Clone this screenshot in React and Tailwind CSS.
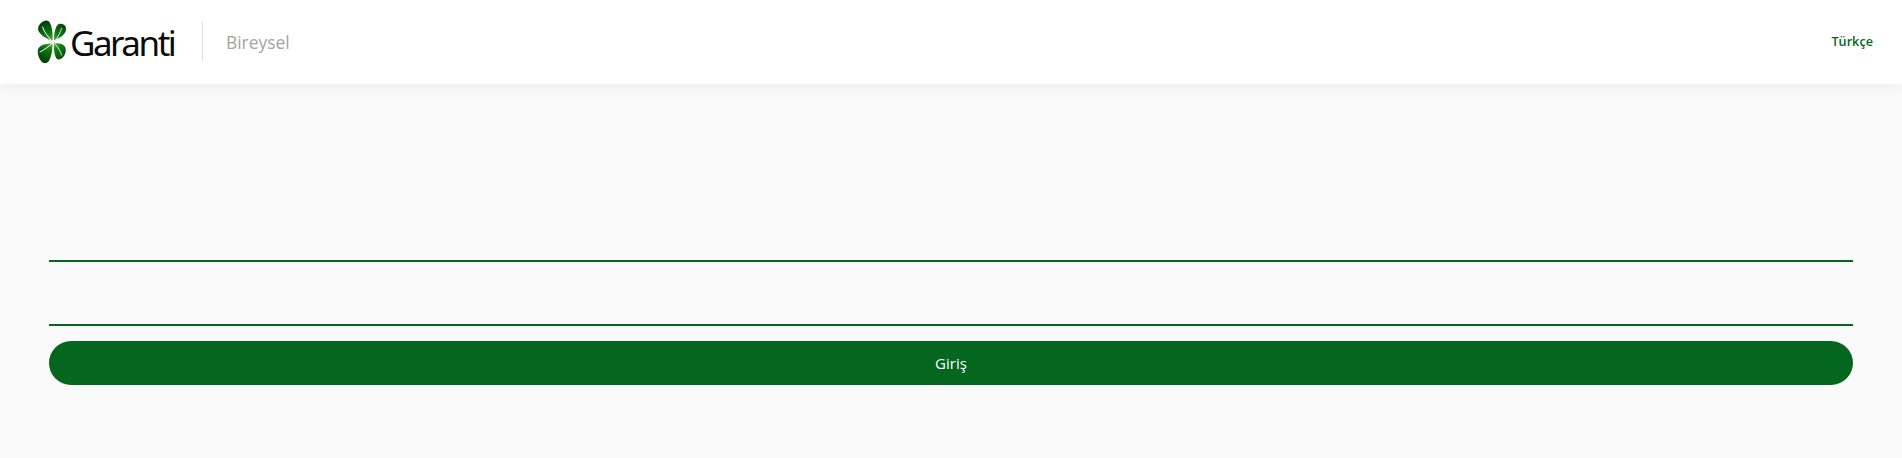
const sans = "font-['Open_Sans','Noto_Sans',sans-serif]";

function Clover() {
  return (
    <svg width="30" height="44" viewBox="0 0 30 44" className="shrink-0">
      <defs>
        <radialGradient id="leaf" gradientUnits="userSpaceOnUse" cx="16" cy="22" r="23">
          <stop offset="0" stopColor="#63c23a" />
          <stop offset="0.4" stopColor="#0f7a14" />
          <stop offset="1" stopColor="#023a07" />
        </radialGradient>
      </defs>
      <g fill="url(#leaf)">
        <path d="M15.5 20.5C11 19.5 5 16.5 2 12C0 9 1.5 5 4 3C6.5 0.5 10 -0.5 12 1.5C15 5 16 13 15.5 20.5Z" />
        <path d="M17 20C17 14 18 8 20.5 5C22.5 3 27 3.5 28.5 6.5C30 10 28 13.5 25 16C22.5 18 19.5 19.5 17 20Z" />
        <path d="M17 23.5C21 23 25 23.5 27.5 26C29.5 28.5 29 33 27 36C25 39 21.5 40.5 19.5 38.5C17.5 35.5 16.5 29 17 23.5Z" />
        <path d="M15.5 23.5C15.5 30 14.5 37 11.5 41.5C9.5 43.5 6.5 43.5 4.5 41.5C2 38.5 0 33.5 1 29.5C2 25.5 8 23.5 15.5 23.5Z" />
      </g>
      <g fill="none" stroke="#ffffff" strokeLinecap="round">
        <path d="M15 21C11 17 7.5 12.5 5.5 7" strokeWidth="1" />
        <path d="M15 23.5C11 27 7 30 3 32" strokeWidth="1" />
        <path d="M18 21C21 17 23.5 12.5 24.5 8.5" strokeWidth="0.8" />
        <path d="M18 24C21 27 23.5 31 24.5 35" strokeWidth="0.8" />
      </g>
    </svg>
  );
}

export default function App() {
  return (
    <div className={`h-[458px] overflow-hidden bg-[#fafafa] ${sans}`}>
      {/* HEADER */}
      <header className="relative flex h-[84px] items-center justify-between bg-white pl-[37px] pr-[29px] shadow-[0_2px_12px_rgba(40,50,80,0.07)]">
        <div className="flex items-center">
          <Clover />
          <span className="ml-[3px] w-[132px] font-['Noto_Sans',sans-serif] text-[35px] leading-none tracking-[-2.5px] text-[#0c0c0c]">
            Garanti
          </span>
          <div className="h-10 w-px bg-[#e2e2e2]" />
          <span className="ml-[23px] text-[17.4px] text-[#a3a3a3]">Bireysel</span>
        </div>
        <a className="text-[12.7px] font-semibold text-[#05671f]">Türkçe</a>
      </header>

      {/* LOGIN FORM */}
      <form className="flex flex-col px-[49px] pt-[114px]">
        <input className="h-[64px] border-b-2 border-[#05671f] bg-transparent outline-none" />
        <input className="h-[64px] border-b-2 border-[#05671f] bg-transparent outline-none" />
        <button
          type="button"
          className="mt-[15px] h-[44px] rounded-[22px] bg-[#05671f] text-[15px] text-white"
        >
          Giriş
        </button>
      </form>
    </div>
  );
}
